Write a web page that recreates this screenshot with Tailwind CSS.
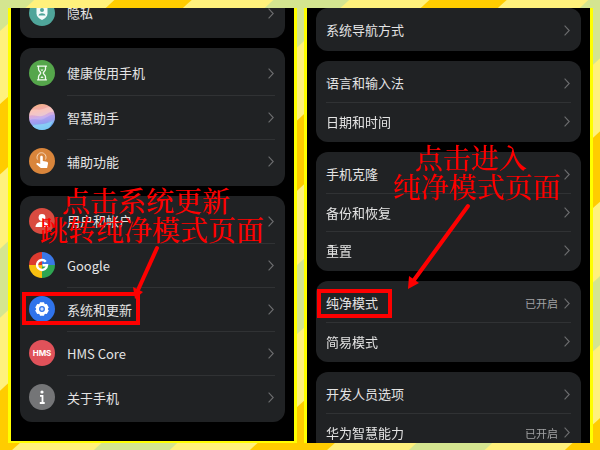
<!DOCTYPE html>
<html lang="zh-CN">
  <head>
    <meta charset="UTF-8" />
    <meta name="viewport" content="width=device-width, initial-scale=1.0" />
    <title>纯净模式</title>
    <script src="https://cdn.jsdelivr.net/npm/@tailwindcss/browser@4"></script>
  </head>
  <body
    class="min-h-screen font-['Noto_Sans_CJK_SC',sans-serif] text-[13px] leading-5 text-[#e4e4e4]"
  >
    <!-- Striped backdrop -->
    <svg class="fixed inset-0 -z-10 h-full w-full">
      <defs>
        <pattern id="stripes" width="212" height="212" patternUnits="userSpaceOnUse" patternTransform="rotate(47.7)">
          <rect width="212" height="212" fill="#fff17c" />
          <rect width="23" height="212" fill="#d4e590" />
          <rect x="77" width="52" height="212" fill="#ffcc00" />
          <rect x="184" width="28" height="212" fill="#d4e590" />
        </pattern>
      </defs>
      <rect width="100%" height="100%" fill="url(#stripes)" />
    </svg>
    <svg class="hidden">
      <symbol id="chevron" viewBox="0 0 6 11">
        <path d="M.6 .6 5.2 5.5 .6 10.4" fill="none" stroke="#6c6d6f" stroke-width="1.1" />
      </symbol>
    </svg>

    <main class="grid grid-cols-2 items-start gap-[7px] pt-2 pr-[7px] pl-2">
      <!-- Settings list -->
      <section class="relative overflow-hidden border-x-3 border-b-2 border-[#ffff00] bg-black px-[9px] pb-[19px]">
        <div class="-mt-5 flex flex-col gap-[10px]">
          <ul class="rounded-xl bg-[#202224] py-[3px]">
            <li>
              <a href="#" class="flex h-11 items-center gap-3 pr-[10px] pl-[9px]">
                <svg class="size-[26px]" viewBox="0 0 26 26">
                  <circle cx="13" cy="13" r="13" fill="#4fa59a" />
                  <path d="M13 4.500 18.500 7v6.500c0 3-2.200 5-5.500 6.500-3.300-1.500-5.500-3.500-5.500-6.500V7z" fill="#f2fbfa" />
                  <circle cx="13" cy="10" r="2" fill="#4fa59a" />
                  <path d="M9.500 15.500c.5-3 6.500-3 7 0z" fill="#4fa59a" />
                </svg>
                <span class="flex h-full grow items-center justify-between">隐私<svg class="mr-px h-[11px] w-[6px]"><use href="#chevron" /></svg></span>
              </a>
            </li>
          </ul>

          <ul class="rounded-xl bg-[#202224] py-[3px]">
            <li>
              <a href="#" class="flex h-11 items-center gap-3 pr-[10px] pl-[9px]">
                <svg class="size-[26px]" viewBox="0 0 26 26">
                  <circle cx="13" cy="13" r="13" fill="#55a64b" />
                  <path d="M8.500 6.200h9M8.500 19.800h9M9.500 6.500v2.500c0 2 2.200 2.700 2.200 4s-2.200 2-2.200 4v2.500M16.500 6.500v2.500c0 2-2.200 2.700-2.200 4s2.200 2 2.200 4v2.500" fill="none" stroke="#f1faef" stroke-width="1.300" stroke-linecap="round" />
                  <path d="M11.500 9.500h3L13 11.200zM11.300 18l1.700-2 1.700 2z" fill="#f1faef" />
                </svg>
                <span class="flex h-full grow items-center justify-between">健康使用手机<svg class="mr-px h-[11px] w-[6px]"><use href="#chevron" /></svg></span>
              </a>
            </li>
            <li>
              <a href="#" class="flex h-11 items-center gap-3 pr-[10px] pl-[9px]">
                <svg class="size-[26px]" viewBox="0 0 26 26">
                  <defs>
                    <linearGradient id="sky" x1="0" y1="0" x2="0.200" y2="1">
                      <stop offset="0" stop-color="#f4b877" />
                      <stop offset="0.350" stop-color="#f3a5b8" />
                      <stop offset="0.600" stop-color="#c6b0f0" />
                      <stop offset="1" stop-color="#58a6f0" />
                    </linearGradient>
                    <clipPath id="orb"><circle cx="13" cy="13" r="13" /></clipPath>
                  </defs>
                  <g clip-path="url(#orb)">
                    <path d="M0 0h26v26H0z" fill="url(#sky)" />
                    <path d="M0 7c6-3 9 0 14-2s6-3 12-1v4c-6-1-8 3-13 4S4 10 0 12z" fill="#fbe3c8" fill-opacity="0.500" />
                    <path d="M0 17c5-4 10 1 15-2s7-5 11-4v5c-5-1-7 3-12 4S4 19 0 21z" fill="#9c8ff0" fill-opacity="0.500" />
                    <path d="M3 22c6-3 10 0 21-5l-5 9H8z" fill="#8fdcf7" fill-opacity="0.700" />
                  </g>
                </svg>
                <span class="flex h-full grow items-center justify-between border-t border-[#303234]">智慧助手<svg class="mr-px h-[11px] w-[6px]"><use href="#chevron" /></svg></span>
              </a>
            </li>
            <li>
              <a href="#" class="flex h-11 items-center gap-3 pr-[10px] pl-[9px]">
                <svg class="size-[26px]" viewBox="0 0 26 26">
                  <circle cx="13" cy="13" r="13" fill="#d9853b" />
                  <path d="M11.200 9c0-1.700 2.600-1.700 2.600 0v4l4 .8c1 .2 1.400 1 1.200 2l-.9 4.200h-6.300l-4.200-3.600c-.8-.8.3-1.800 1.200-1.400l2.400 1z" fill="#fff" />
                  <path d="M8.600 11.500a4.500 4.500 0 1 1 7.800 0" fill="none" stroke="#f7d9bb" stroke-width="1" />
                </svg>
                <span class="flex h-full grow items-center justify-between border-t border-[#303234]">辅助功能<svg class="mr-px h-[11px] w-[6px]"><use href="#chevron" /></svg></span>
              </a>
            </li>
          </ul>

          <ul class="rounded-xl bg-[#202224] py-[3px]">
            <li>
              <a href="#" class="flex h-11 items-center gap-3 pr-[10px] pl-[9px]">
                <svg class="size-[26px]" viewBox="0 0 26 26">
                  <circle cx="13" cy="13" r="13" fill="#d94b40" />
                  <circle cx="13" cy="9.500" r="3.400" fill="#fff" />
                  <path d="M6.500 19c0-7 13-7 13 0z" fill="#fff" />
                </svg>
                <span class="flex h-full grow items-center justify-between">用户和帐户<svg class="mr-px h-[11px] w-[6px]"><use href="#chevron" /></svg></span>
              </a>
            </li>
            <li>
              <a href="#" class="flex h-11 items-center gap-3 pr-[10px] pl-[9px]">
                <svg class="size-[26px]" viewBox="0 0 26 26">
                  <path d="M13 13V0A13 13 0 0 0 0 13z" fill="#dc3a2f" />
                  <path d="M13 13h13A13 13 0 0 0 13 0z" fill="#3a78e8" />
                  <path d="M13 13v13a13 13 0 0 0 13-13z" fill="#2ea552" />
                  <path d="M13 13H0a13 13 0 0 0 13 13z" fill="#f8bf10" />
                  <path d="M16.800 9.700A5 5 0 1 0 18 13.200H13.500" fill="none" stroke="#fff" stroke-width="2.400" />
                </svg>
                <span class="flex h-full grow items-center justify-between border-t border-[#303234]">Google<svg class="mr-px h-[11px] w-[6px]"><use href="#chevron" /></svg></span>
              </a>
            </li>
            <li>
              <a href="#" class="flex h-11 items-center gap-3 pr-[10px] pl-[9px]">
                <svg class="size-[26px]" viewBox="0 0 26 26">
                  <circle cx="13" cy="13" r="13" fill="#2f73ea" />
                  <g fill="#fff">
                    <circle cx="13" cy="13" r="5.800" />
                    <path id="tooth" d="M11 6.300h4l1 3h-6zM11 19.700h4l1-3h-6z" />
                    <use href="#tooth" transform="rotate(60 13 13)" />
                    <use href="#tooth" transform="rotate(120 13 13)" />
                  </g>
                  <circle cx="13" cy="13" r="2.300" fill="#cfe0ff" stroke="#2f73ea" stroke-width="1.300" />
                </svg>
                <span class="flex h-full grow items-center justify-between border-t border-[#303234]">系统和更新<svg class="mr-px h-[11px] w-[6px]"><use href="#chevron" /></svg></span>
              </a>
            </li>
            <li>
              <a href="#" class="flex h-11 items-center gap-3 pr-[10px] pl-[9px]">
                <span class="flex size-[26px] items-center justify-center rounded-full bg-[#e0525a] font-['Inter',sans-serif] text-[8px] font-bold text-white">HMS</span>
                <span class="flex h-full grow items-center justify-between border-t border-[#303234]">HMS Core<svg class="mr-px h-[11px] w-[6px]"><use href="#chevron" /></svg></span>
              </a>
            </li>
            <li>
              <a href="#" class="flex h-11 items-center gap-3 pr-[10px] pl-[9px]">
                <svg class="size-[26px]" viewBox="0 0 26 26">
                  <circle cx="13" cy="13" r="13" fill="#747577" />
                  <circle cx="13" cy="8" r="1.600" fill="#fff" />
                  <path d="M11 11.800h2.500V19M10.800 19h4.900" fill="none" stroke="#fff" stroke-width="1.800" />
                </svg>
                <span class="flex h-full grow items-center justify-between border-t border-[#303234]">关于手机<svg class="mr-px h-[11px] w-[6px]"><use href="#chevron" /></svg></span>
              </a>
            </li>
          </ul>
        </div>

        <!-- Step 1 -->
        <p class="absolute top-[178px] left-[29px] font-['SimSun','Noto_Serif_CJK_SC','Noto_Sans_CJK_SC',serif] text-[28px] leading-[29px] font-medium whitespace-nowrap text-[#fe0000]">
          <span class="ml-[22px]">点击系统更新</span><br />跳转纯净模式页面
        </p>
        <div class="absolute top-[284px] left-[11px] h-[33px] w-[118px] border-4 border-[#fe0000]"></div>
        <svg class="absolute top-[236px] left-[120px] h-[56px] w-[32px]" viewBox="0 0 32 56">
          <path d="M26 4 7 46" stroke="#fe0000" stroke-width="4" stroke-linecap="round" />
          <path d="M2 43 12 48 4 55z" fill="#fe0000" />
        </svg>
      </section>

      <!-- System and updates -->
      <section class="relative overflow-hidden border-x-3 border-[#ffff00] bg-black px-[9px]">
        <div class="-mb-[10px] flex flex-col gap-[10px]">
          <ul class="rounded-xl bg-[#202224] pt-[3px] pb-[2px]">
            <li class="px-[10px]">
              <a href="#" class="flex h-[38px] items-center justify-between">系统导航方式<svg class="mr-px h-[11px] w-[6px]"><use href="#chevron" /></svg></a>
            </li>
          </ul>

          <ul class="rounded-xl bg-[#202224] pt-[3px] pb-[2px]">
            <li class="px-[10px]">
              <a href="#" class="flex h-[38px] items-center justify-between">语言和输入法<svg class="mr-px h-[11px] w-[6px]"><use href="#chevron" /></svg></a>
            </li>
            <li class="px-[10px]">
              <a href="#" class="flex h-[38px] items-center justify-between border-t border-[#303234]">日期和时间<svg class="mr-px h-[11px] w-[6px]"><use href="#chevron" /></svg></a>
            </li>
          </ul>

          <ul class="rounded-xl bg-[#202224] pt-[3px] pb-[2px]">
            <li class="px-[10px]">
              <a href="#" class="flex h-[38px] items-center justify-between">手机克隆<svg class="mr-px h-[11px] w-[6px]"><use href="#chevron" /></svg></a>
            </li>
            <li class="px-[10px]">
              <a href="#" class="flex h-[38px] items-center justify-between border-t border-[#303234]">备份和恢复<svg class="mr-px h-[11px] w-[6px]"><use href="#chevron" /></svg></a>
            </li>
            <li class="px-[10px]">
              <a href="#" class="flex h-[38px] items-center justify-between border-t border-[#303234]">重置<svg class="mr-px h-[11px] w-[6px]"><use href="#chevron" /></svg></a>
            </li>
          </ul>

          <ul class="rounded-xl bg-[#202224] pt-[3px] pb-[2px]">
            <li class="px-[10px]">
              <a href="#" class="flex h-[38px] items-center">
                纯净模式
                <span class="mr-[6px] ml-auto text-[11px] text-[#a2a3a4]">已开启</span>
                <svg class="mr-px h-[11px] w-[6px]"><use href="#chevron" /></svg>
              </a>
            </li>
            <li class="px-[10px]">
              <a href="#" class="flex h-[38px] items-center justify-between border-t border-[#303234]">简易模式<svg class="mr-px h-[11px] w-[6px]"><use href="#chevron" /></svg></a>
            </li>
          </ul>

          <ul class="rounded-xl bg-[#202224] pt-[3px] pb-[2px]">
            <li class="px-[10px]">
              <a href="#" class="flex h-[38px] items-center justify-between">开发人员选项<svg class="mr-px h-[11px] w-[6px]"><use href="#chevron" /></svg></a>
            </li>
            <li class="px-[10px]">
              <a href="#" class="flex h-[38px] items-center border-t border-[#303234]">
                华为智慧能力
                <span class="mr-[6px] ml-auto text-[11px] text-[#a2a3a4]">已开启</span>
                <svg class="mr-px h-[11px] w-[6px]"><use href="#chevron" /></svg>
              </a>
            </li>
          </ul>
        </div>

        <!-- Step 2 -->
        <p class="absolute top-[135px] left-[86px] font-['SimSun','Noto_Serif_CJK_SC','Noto_Sans_CJK_SC',serif] text-[28px] leading-[29px] font-medium whitespace-nowrap text-[#fe0000]">
          <span class="ml-[22px]">点击进入</span><br />纯净模式页面
        </p>
        <div class="absolute top-[281px] left-[10px] h-[29px] w-[75px] border-4 border-[#fe0000]"></div>
        <svg class="absolute top-[194px] left-[98px] h-[90px] w-[68px]" viewBox="0 0 68 90">
          <path d="M63 4 9 78" stroke="#fe0000" stroke-width="4" stroke-linecap="round" />
          <path d="M4 74 14 81 3 87z" fill="#fe0000" />
        </svg>
      </section>
    </main>
  </body>
</html>
